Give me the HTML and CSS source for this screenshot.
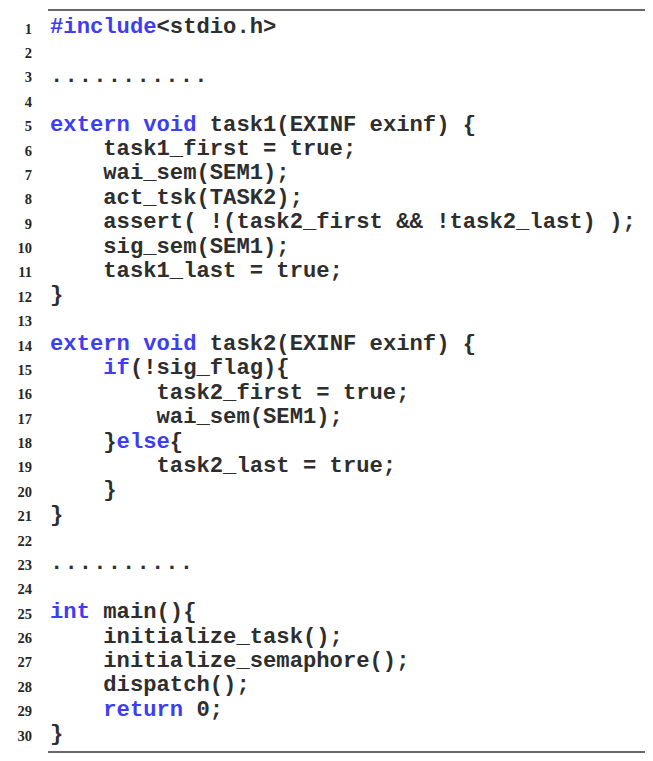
FILE: index.html
```html
<!DOCTYPE html>
<html>
<head>
<meta charset="utf-8">
<link rel="stylesheet" href="styles.css">
</head>
<body>
<div class="listing">
  <div class="rule"></div>
  <div class="code">
    <div class="ln"><span class="num">1</span><span class="src"><span class="kw">#include</span>&lt;stdio.h&gt;</span></div>
    <div class="ln"><span class="num">2</span><span class="src"></span></div>
    <div class="ln"><span class="num">3</span><span class="src dots">...........</span></div>
    <div class="ln"><span class="num">4</span><span class="src"></span></div>
    <div class="ln"><span class="num">5</span><span class="src"><span class="kw">extern</span> <span class="kw">void</span> task1(EXINF exinf) {</span></div>
    <div class="ln"><span class="num">6</span><span class="src">    task1_first = true;</span></div>
    <div class="ln"><span class="num">7</span><span class="src">    wai_sem(SEM1);</span></div>
    <div class="ln"><span class="num">8</span><span class="src">    act_tsk(TASK2);</span></div>
    <div class="ln"><span class="num">9</span><span class="src">    assert( !(task2_first &amp;&amp; !task2_last) );</span></div>
    <div class="ln"><span class="num">10</span><span class="src">    sig_sem(SEM1);</span></div>
    <div class="ln"><span class="num">11</span><span class="src">    task1_last = true;</span></div>
    <div class="ln"><span class="num">12</span><span class="src">}</span></div>
    <div class="ln"><span class="num">13</span><span class="src"></span></div>
    <div class="ln"><span class="num">14</span><span class="src"><span class="kw">extern</span> <span class="kw">void</span> task2(EXINF exinf) {</span></div>
    <div class="ln"><span class="num">15</span><span class="src">    <span class="kw">if</span>(!sig_flag){</span></div>
    <div class="ln"><span class="num">16</span><span class="src">        task2_first = true;</span></div>
    <div class="ln"><span class="num">17</span><span class="src">        wai_sem(SEM1);</span></div>
    <div class="ln"><span class="num">18</span><span class="src">    }<span class="kw">else</span>{</span></div>
    <div class="ln"><span class="num">19</span><span class="src">        task2_last = true;</span></div>
    <div class="ln"><span class="num">20</span><span class="src">    }</span></div>
    <div class="ln"><span class="num">21</span><span class="src">}</span></div>
    <div class="ln"><span class="num">22</span><span class="src"></span></div>
    <div class="ln"><span class="num">23</span><span class="src dots">..........</span></div>
    <div class="ln"><span class="num">24</span><span class="src"></span></div>
    <div class="ln"><span class="num">25</span><span class="src"><span class="kw">int</span> main(){</span></div>
    <div class="ln"><span class="num">26</span><span class="src">    initialize_task();</span></div>
    <div class="ln"><span class="num">27</span><span class="src">    initialize_semaphore();</span></div>
    <div class="ln"><span class="num">28</span><span class="src">    dispatch();</span></div>
    <div class="ln"><span class="num">29</span><span class="src">    <span class="kw">return</span> 0;</span></div>
    <div class="ln"><span class="num">30</span><span class="src">}</span></div>
  </div>
  <div class="rule"></div>
</div>
</body>
</html>
```

FILE: styles.css
```css
html, body {
  margin: 0;
  padding: 0;
  background: #ffffff;
}

.listing {
  padding-top: 9px;
}

.rule {
  margin-left: 48px;
  width: 597px;
  height: 2px;
  background: #686868;
}

.code {
  padding: 5px 0 4px 0;
}

.ln {
  display: grid;
  grid-template-columns: 32px 1fr;
  column-gap: 18px;
  height: 24.38px;
  align-items: center;
}

.num {
  text-align: right;
  font-family: "Liberation Serif", serif;
  font-weight: bold;
  font-size: 14.5px;
  color: #262626;
  padding-top: 2px;
}

.src {
  font-family: "Liberation Mono", monospace;
  font-weight: bold;
  font-size: 22.2px;
  line-height: 24px;
  color: #2e2e2e;
  white-space: pre;
}

.kw {
  color: #3d3df2;
}

.dots {
  letter-spacing: 1.1px;
}
```
